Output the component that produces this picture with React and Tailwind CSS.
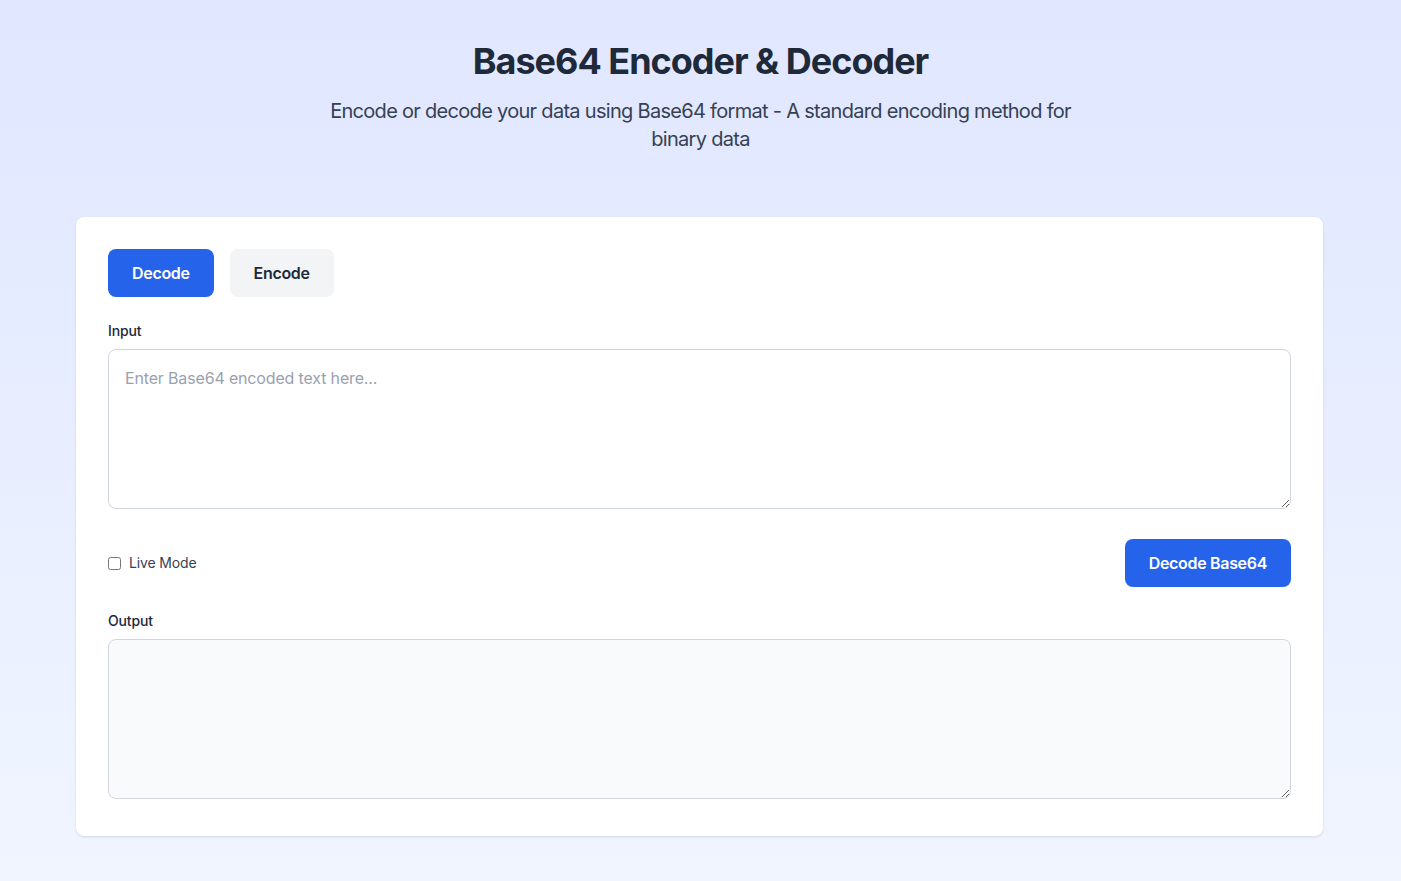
import React, { useState } from "react";

export default function App() {
  const [mode, setMode] = useState("decode");
  return (
    <div
      className="min-h-screen w-full bg-gradient-to-b from-[#e0e7ff] to-[#f0f5ff]"
      style={{ fontFamily: "Inter, 'Noto Sans', sans-serif" }}
    >
      <div className="mx-auto max-w-[1280px] px-4 pt-[41px] pb-[45px]">
        <div className="mb-[64px] text-center">
          <h1 className="mb-4 text-4xl font-bold tracking-[-0.028em] text-gray-800">Base64 Encoder &amp; Decoder</h1>
          <p className="mx-auto max-w-3xl text-xl leading-7 tracking-[-0.035em] text-gray-700">
            Encode or decode your data using Base64 format - A standard encoding method for binary data
          </p>
        </div>

        <div className="ml-[-0.5px] mr-[1.5px] rounded-lg bg-white p-8 shadow-sm">
          <div className="mb-6 flex gap-4">
            <button
              onClick={() => setMode("decode")}
              className={`rounded-lg px-6 py-3 text-base font-semibold tracking-[-0.02em] ${mode === "decode" ? "bg-[#2563eb] text-white" : "bg-gray-100 text-gray-800"}`}
            >
              Decode
            </button>
            <button
              onClick={() => setMode("encode")}
              className={`rounded-lg px-6 py-3 text-base font-semibold tracking-[-0.02em] ${mode === "encode" ? "bg-[#2563eb] text-white" : "bg-gray-100 text-gray-800"}`}
            >
              Encode
            </button>
          </div>

          <label className="mb-2 block text-sm font-medium tracking-[-0.01em] text-gray-800">Input</label>
          <textarea
            className="mb-[30px] block h-40 w-full rounded-lg border border-gray-300 p-4 text-base tracking-[-0.01em] text-gray-800 placeholder-gray-400 outline-none"
            placeholder={mode === "decode" ? "Enter Base64 encoded text here..." : "Enter text to encode here..."}
          />

          <div className="mb-6 flex items-center justify-between">
            <label className="flex items-center text-sm tracking-[-0.01em] text-gray-700">
              <input type="checkbox" className="h-[13px] w-[13px]" />
              <span className="ml-2">Live Mode</span>
            </label>
            <button className="rounded-lg bg-[#2563eb] px-6 py-3 text-base font-semibold tracking-[-0.02em] text-white">
              {mode === "decode" ? "Decode Base64" : "Encode Base64"}
            </button>
          </div>

          <label className="mb-2 block text-sm font-medium tracking-[-0.01em] text-gray-800">Output</label>
          <textarea
            readOnly
            className="mb-[5px] block h-40 w-full rounded-lg border border-gray-300 bg-gray-50 p-4 text-base text-gray-800 outline-none"
          />
        </div>
      </div>
    </div>
  );
}
